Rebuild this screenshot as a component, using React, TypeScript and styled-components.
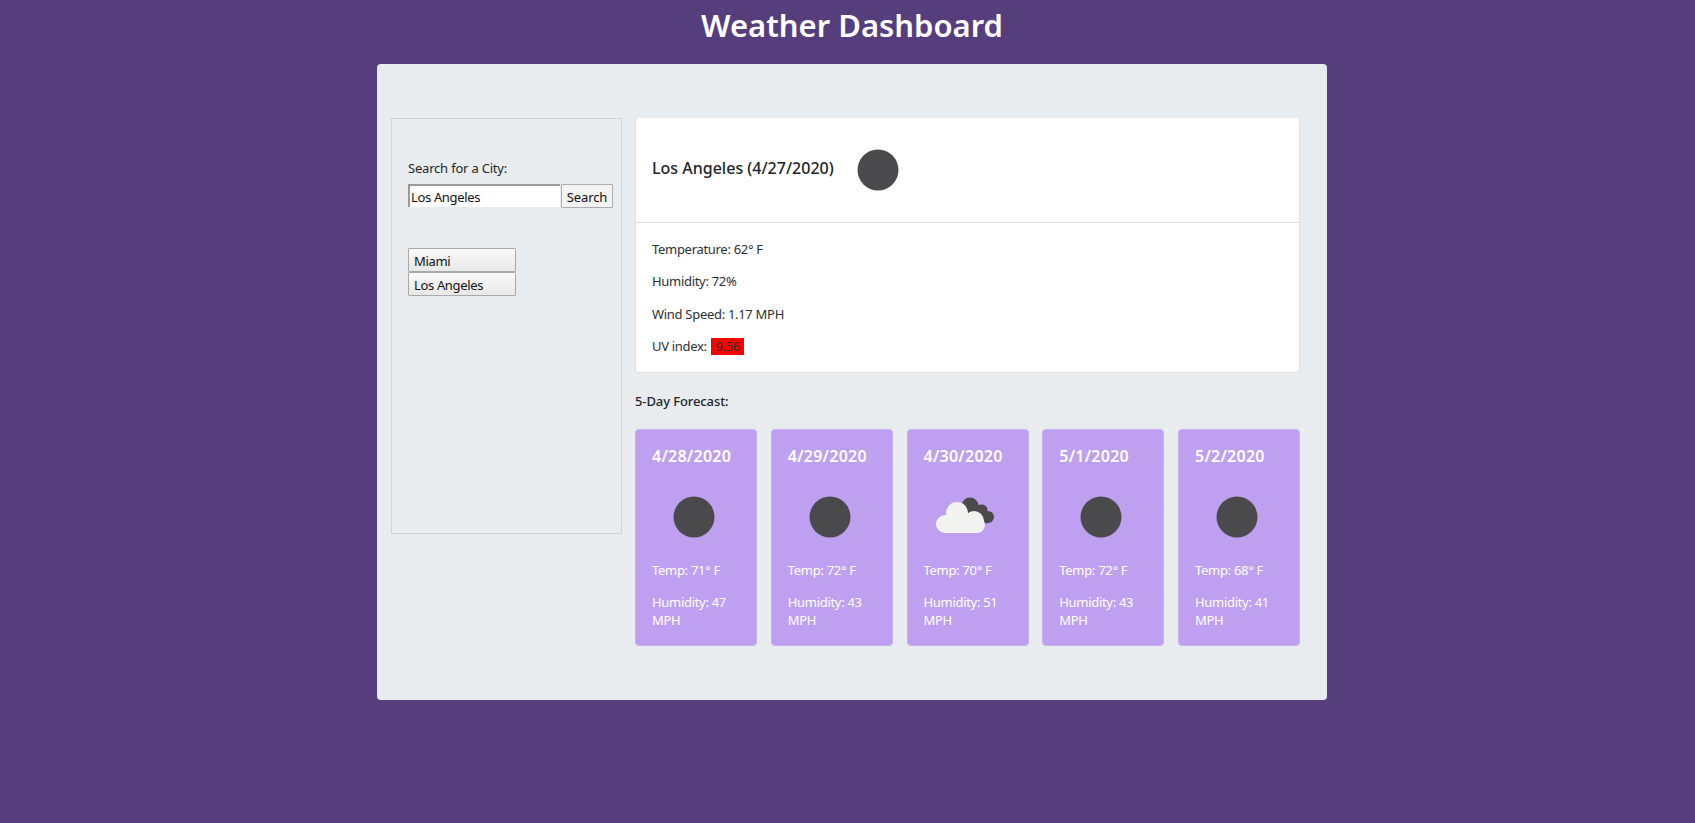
import React from 'react';
import styled, { createGlobalStyle } from 'styled-components';

const GlobalStyle = createGlobalStyle`
  html, body {
    margin: 0;
    padding: 0;
    background: #563d7c;
  }
  body {
    font-family: "Noto Sans", "Open Sans", sans-serif;
    font-size: 13px;
    color: #212529;
  }
  * {
    box-sizing: border-box;
  }
`;

const Page = styled.div`
  min-height: 823px;
  padding-left: 9px;
  display: flex;
  flex-direction: column;
  align-items: center;
`;

const Title = styled.h1`
  margin: 0;
  height: 64px;
  padding-top: 3px;
  font-size: 31px;
  line-height: 44px;
  font-weight: 600;
  color: #fff;
`;

const Panel = styled.main`
  width: 950px;
  height: 636px;
  padding: 54px 26px 0 14px;
  background: #e9ecef;
  border-radius: 4px;
  display: flex;
  gap: 13px;
  align-items: flex-start;
`;

const Sidebar = styled.aside`
  width: 231px;
  height: 416px;
  flex: none;
  padding: 40px 7px 0 16px;
  border: 1px solid #d0d3d6;
`;

const Label = styled.label`
  display: block;
  line-height: 18px;
  margin-bottom: 7px;
  letter-spacing: -0.2px;
`;

const SearchRow = styled.div`
  display: flex;
  align-items: flex-start;
  gap: 1px;
  margin-bottom: 40px;
`;

const CityInput = styled.input`
  width: 152px;
  height: 23px;
  padding: 1px 0 0 1px;
  border-width: 2px 0 0 2px;
  border-style: solid;
  border-color: #9a9a9a;
  background: #fff;
  font: inherit;
  letter-spacing: -0.35px;
  color: #111;
  outline: none;
`;

const SearchButton = styled.button`
  width: 52px;
  height: 24px;
  padding: 1px 0 0;
  border: 1px solid #adadad;
  border-radius: 1px;
  background: #f3f3f3;
  font: inherit;
  letter-spacing: -0.1px;
  color: #111;
`;

const HistoryList = styled.div`
  display: flex;
  flex-direction: column;
`;

const HistoryButton = styled.button`
  width: 108px;
  height: 24px;
  padding: 1px 0 0 5px;
  text-align: left;
  border: 1px solid #a9a9a9;
  border-radius: 1px;
  background: linear-gradient(#fafafa, #e8e8e8);
  font: inherit;
  letter-spacing: -0.35px;
  color: #111;
`;

const Content = styled.section`
  width: 665px;
  flex: none;
`;

const CurrentCard = styled.div`
  height: 255px;
  background: #fff;
  border: 1px solid #dfdfdf;
  border-top: 0;
  border-radius: 4px;
`;

const CurrentHeader = styled.header`
  height: 105px;
  padding-left: 16px;
  border-bottom: 1px solid #dfdfdf;
  display: flex;
  align-items: center;
  gap: 23px;
`;

const CityName = styled.h5`
  margin: 0 0 5px;
  font-size: 16px;
  font-weight: 500;
  color: #212529;
`;

const CurrentBody = styled.div`
  padding: 17px 16px 0;
`;

const Stat = styled.p`
  margin: 0 0 14.3px;
  line-height: 18px;
  letter-spacing: -0.3px;
  color: #2b3035;
`;

const UvValue = styled.span`
  display: inline-block;
  background: #f00;
  line-height: 17px;
  margin-left: 1px;
  padding: 0 4.500px;
`;

const ForecastTitle = styled.h6`
  margin: 0;
  padding-top: 19px;
  height: 56px;
  font-size: 13px;
  line-height: 18px;
  font-weight: 500;
  letter-spacing: -0.1px;
`;

const ForecastRow = styled.div`
  display: flex;
  justify-content: space-between;
`;

const ForecastCard = styled.article`
  width: 122px;
  height: 217px;
  padding: 15px 16px 0;
  background: #bf9ff0;
  border: 1px solid #c9aef0;
  border-radius: 4px;
  color: #fff;
`;

const ForecastDate = styled.h5`
  margin: 0;
  font-size: 16px;
  line-height: 22px;
  font-weight: 600;
  letter-spacing: 0.25px;
`;

const IconSlot = styled.div`
  height: 64px;
  margin: 18px 0 12px;
  padding-right: 4px;
  display: flex;
  align-items: center;
  justify-content: center;
`;

const ForecastText = styled.p`
  margin: 0 0 14px;
  line-height: 18px;
  letter-spacing: -0.3px;
`;

const Sun = () => (
  <svg width="42" height="42" viewBox="0 0 42 42">
    <circle cx="21" cy="21" r="20.5" fill="#4a4a4c" />
  </svg>
);

const Clouds = () => (
  <svg width="60" height="40" viewBox="0 0 60 40">
    <g fill="#4a4a4c">
      <circle cx="34" cy="9" r="8.500" />
      <circle cx="46" cy="13" r="5.500" />
      <circle cx="52" cy="20" r="6" />
      <path d="M28 6 L46 8 L52 26 L34 28 Z" />
    </g>
    <g fill="#f2f2f0">
      <circle cx="9" cy="27" r="9" />
      <circle cx="21" cy="16" r="11" />
      <circle cx="38" cy="24" r="10" />
      <circle cx="41" cy="28" r="8" />
      <rect x="9" y="18" width="32" height="18" />
    </g>
  </svg>
);

const forecast = [
  { date: '4/28/2020', temp: 71, humidity: 47, cloudy: false },
  { date: '4/29/2020', temp: 72, humidity: 43, cloudy: false },
  { date: '4/30/2020', temp: 70, humidity: 51, cloudy: true },
  { date: '5/1/2020', temp: 72, humidity: 43, cloudy: false },
  { date: '5/2/2020', temp: 68, humidity: 41, cloudy: false },
];

const App: React.FC = () => {
  return (
    <Page>
      <GlobalStyle />
      <Title>Weather Dashboard</Title>
      <Panel>
        <Sidebar>
          <Label htmlFor="city">Search for a City:</Label>
          <SearchRow>
            <CityInput id="city" defaultValue="Los Angeles" />
            <SearchButton>Search</SearchButton>
          </SearchRow>
          <HistoryList>
            <HistoryButton>Miami</HistoryButton>
            <HistoryButton>Los Angeles</HistoryButton>
          </HistoryList>
        </Sidebar>

        <Content>
          <CurrentCard>
            <CurrentHeader>
              <CityName>Los Angeles (4/27/2020)</CityName>
              <Sun />
            </CurrentHeader>
            <CurrentBody>
              <Stat>Temperature: 62° F</Stat>
              <Stat>Humidity: 72%</Stat>
              <Stat>Wind Speed: 1.17 MPH</Stat>
              <Stat>UV index: <UvValue>9.56</UvValue></Stat>
            </CurrentBody>
          </CurrentCard>

          <ForecastTitle>5-Day Forecast:</ForecastTitle>
          <ForecastRow>
            {forecast.map((day) => (
              <ForecastCard key={day.date}>
                <ForecastDate>{day.date}</ForecastDate>
                <IconSlot>{day.cloudy ? <Clouds /> : <Sun />}</IconSlot>
                <ForecastText>Temp: {day.temp}° F</ForecastText>
                <ForecastText>Humidity: {day.humidity} MPH</ForecastText>
              </ForecastCard>
            ))}
          </ForecastRow>
        </Content>
      </Panel>
    </Page>
  );
};

export default App;
